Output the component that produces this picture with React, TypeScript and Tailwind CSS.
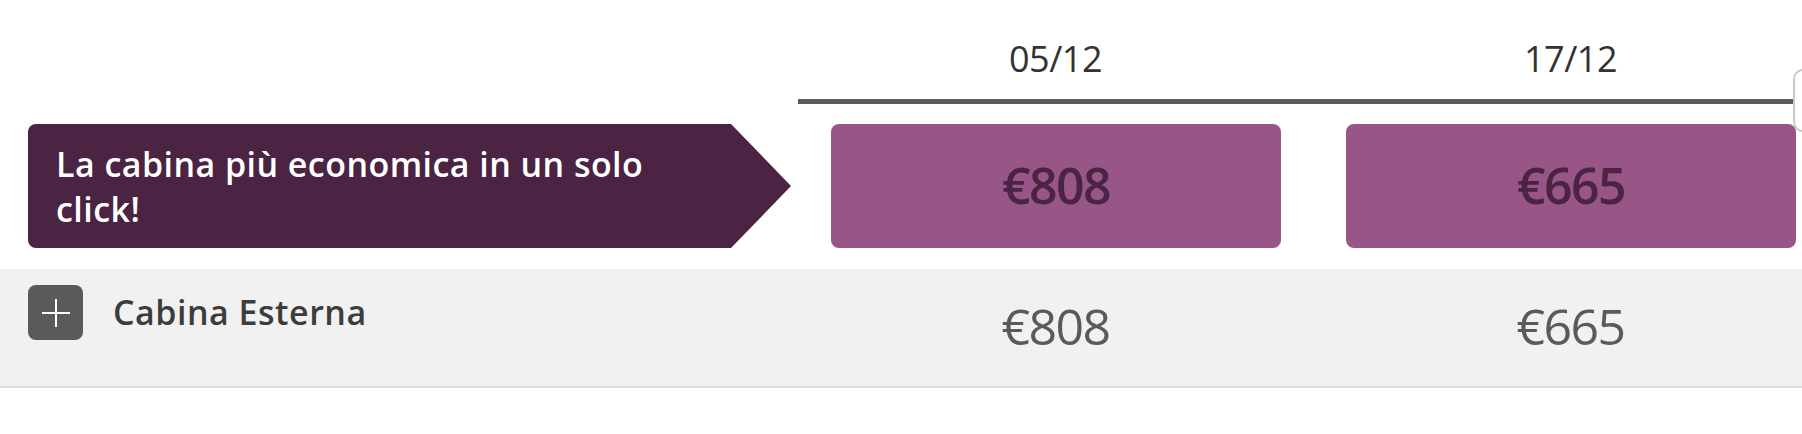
import React from "react";

const cols = [
  { date: "05/12", price: "€808" },
  { date: "17/12", price: "€665" },
];

export default function App() {
  return (
    <div
      className="relative w-[1802px] h-[434px] overflow-hidden bg-white"
      style={{ fontFamily: '"Open Sans", "Noto Sans", sans-serif' }}
    >
      {/* header dates */}
      <div className="flex">
        <div className="w-[798px] shrink-0" />
        {cols.map((c) => (
          <div
            key={c.date}
            className="w-[515px] shrink-0 pt-[34px] pb-[16px] border-b-[5px] border-[#5a5a5a] text-center text-[36px] leading-[49px] tracking-[-0.5px] text-[#333333]"
          >
            {c.date}
          </div>
        ))}
      </div>

      {/* highlight row */}
      <div className="flex mt-[20px]">
        <div className="w-[798px] shrink-0 pl-[28px] flex">
          <div className="w-[703px] h-[124px] rounded-l-lg bg-[#4a2442] pl-[28px] pt-[18px]">
            <p className="w-[650px] text-[34px] leading-[45px] tracking-[0.45px] font-semibold text-white">
              La cabina più economica in un solo click!
            </p>
          </div>
          <div className="w-0 h-0 border-y-[62px] border-y-transparent border-l-[60px] border-l-[#4a2442]" />
        </div>
        {cols.map((c) => (
          <div key={c.price} className="w-[515px] shrink-0 pl-[33px] pr-[32px]">
            <div className="h-[124px] rounded-lg bg-[#975588] flex items-center justify-center pb-[2px]">
              <span className="text-[50px] tracking-[-1.6px] font-semibold text-[#4a2442]">{c.price}</span>
            </div>
          </div>
        ))}
      </div>

      {/* cabin row */}
      <div className="flex mt-[21px] h-[119px] bg-[#f1f1f1] border-b-2 border-[#dcdcdc]">
        <div className="w-[798px] shrink-0 pl-[28px] pt-[16px]">
          <div className="flex items-center gap-[30px]">
            <div className="w-[55px] h-[55px] rounded-lg bg-[#5a5a5a] flex items-center justify-center">
              <svg width="28" height="28" viewBox="0 0 28 28">
                <path d="M14 0V28M0 14H28" stroke="#ffffff" strokeWidth="2" />
              </svg>
            </div>
            <span className="text-[34px] tracking-[0.5px] font-semibold text-[#3c3c3c]">Cabina Esterna</span>
          </div>
        </div>
        {cols.map((c) => (
          <div
            key={c.date + "r"}
            className="w-[515px] shrink-0 pt-[20px] text-center text-[50px] tracking-[-1.6px] text-[#5a5a5a]"
          >
            {c.price}
          </div>
        ))}
      </div>

      {/* partially visible scroll button */}
      <div className="absolute left-[1793px] top-[69px] w-[40px] h-[63px] rounded-[10px] border-2 border-[#c8c8c8] bg-white" />
    </div>
  );
}
